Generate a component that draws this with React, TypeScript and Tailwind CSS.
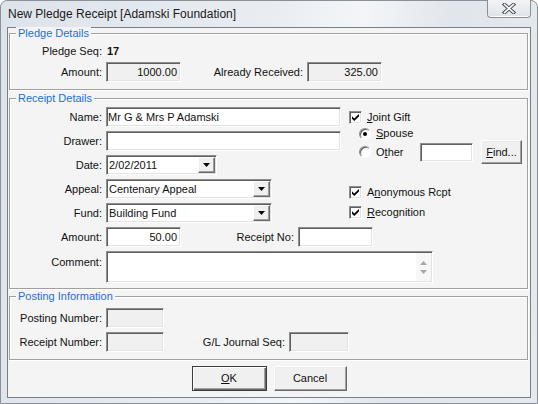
import type { ReactNode } from 'react'

// classic 3D edges
const sunken =
  'border border-t-[#8d8d8d] border-l-[#8d8d8d] border-b-white border-r-white shadow-[inset_1px_1px_0_#5f5f5f,inset_-1px_-1px_0_#e3e3e3]'
const raised =
  'border border-t-white border-l-white border-b-[#696969] border-r-[#696969] shadow-[inset_-1px_-1px_0_#a0a0a0,inset_1px_1px_0_#ececec] bg-[#f0f0f0]'

function Group({ title, className, children }: { title: string; className: string; children: ReactNode }) {
  return (
    <div className={`relative ml-[1px] w-[519px] border border-[#a0a0a0] shadow-[inset_1px_1px_0_#fff,1px_1px_0_#fff] ${className}`}>
      <span className="absolute -top-[7px] left-[6px] bg-[#f4f4f4] px-[2px] leading-[13px] text-[#1f6fd6]">{title}</span>
      {children}
    </div>
  )
}

function Label({ children, className = 'w-[92px]' }: { children: ReactNode; className?: string }) {
  return <span className={`shrink-0 text-right leading-[13px] ${className}`}>{children}</span>
}

function Field({ w, value = '', right, gray, h = 'h-[20px]' }: { w: string; value?: string; right?: boolean; gray?: boolean; h?: string }) {
  return (
    <div
      className={`${sunken} ${w} ${h} ${gray ? 'bg-[#f0f0f0]' : 'bg-white'} flex items-center ${right ? 'justify-end pr-[3px]' : 'pl-[1px]'} ml-[4px] shrink-0`}
    >
      {value}
    </div>
  )
}

function Combo({ w, value }: { w: string; value: string }) {
  return (
    <div className={`${sunken} ${w} h-[20px] bg-white flex items-center ml-[4px] shrink-0`}>
      <span className="flex-1 pl-[2px]">{value}</span>
      <div className={`${raised} w-[17px] h-[16px] mr-[1px] flex items-center justify-center`}>
        <svg width="7" height="4" viewBox="0 0 7 4">
          <path d="M0 0h7L3.5 4z" fill="#000" />
        </svg>
      </div>
    </div>
  )
}

function Check({ children }: { children: ReactNode }) {
  return (
    <div className="flex h-[13px] items-center">
      <div className={`${sunken} w-[13px] h-[13px] bg-white flex items-center justify-center shrink-0`}>
        <svg width="7" height="7" viewBox="0 0 7 7">
          <path d="M0 2.2L2.2 4.4L7 0V2.6L2.2 7L0 4.8z" fill="#000" />
        </svg>
      </div>
      <span className="ml-[5px] leading-[13px]">{children}</span>
    </div>
  )
}

function Radio({ on }: { on?: boolean }) {
  return (
    <div className="ml-[10px] w-[12px] h-[12px] rounded-full border border-t-[#8d8d8d] border-l-[#8d8d8d] border-b-white border-r-white shadow-[inset_1px_1px_0_#5f5f5f] bg-white flex items-center justify-center shrink-0">
      {on && <div className="w-[4px] h-[4px] rounded-full bg-black" />}
    </div>
  )
}

export default function App() {
  return (
    <div className="w-[538px] h-[404px] overflow-hidden bg-white font-['Liberation_Sans',Arial,sans-serif] text-[11px] text-[#111]">
      <div className="flex h-[404px] w-[538px] flex-col rounded-t-[7px] border border-[#8a9199] bg-[linear-gradient(100deg,#dde3ea_0%,#e9edf2_45%,#f3f5f8_60%,#e1e6ec_75%,#e6eaef_100%)]">
        {/* title bar */}
        <div className="flex h-[26px] shrink-0 items-start">
          <span className="pl-[7px] pt-[6px] text-[12px] leading-[15px] text-[#1b1b1b]">New Pledge Receipt [Adamski Foundation]</span>
          <div className="ml-auto mr-[6px] -mt-[1px] flex h-[18px] w-[44px] items-center justify-center rounded-b-[4px] border border-t-0 border-[#8b9097] bg-[linear-gradient(#f2f4f6,#dfe3e8)] shadow-[inset_0_-1px_0_#fff]">
            <svg width="14" height="11" viewBox="0 0 14 11">
              <path d="M2.5 1.5L11.5 9.5M11.5 1.5L2.5 9.5" stroke="#4a4f55" strokeWidth="3.6" strokeLinecap="square" />
              <path d="M2.5 1.5L11.5 9.5M11.5 1.5L2.5 9.5" stroke="#fff" strokeWidth="1.6" strokeLinecap="square" />
            </svg>
          </div>
        </div>

        {/* client area */}
        <div className="mx-[6px] flex h-[371px] flex-col border border-[#7b7f85] bg-[#f4f4f4]">
          <Group title="Pledge Details" className="mt-[5px] pt-[8px] pb-[7px]">
            <div className="flex h-[18px] items-center">
              <Label>Pledge Seq:</Label>
              <span className="ml-[5px] font-bold">17</span>
            </div>
            <div className="mt-[2px] flex h-[20px] items-center">
              <Label>Amount:</Label>
              <Field w="w-[75px]" value="1000.00" right gray />
              <Label className="w-[122px]">Already Received:</Label>
              <Field w="w-[75px]" value="325.00" right gray />
            </div>
          </Group>

          <Group title="Receipt Details" className="mt-[8px] pt-[8px] pb-[5px]">
            <div className="flex">
              <div className="flex flex-col gap-[4px]">
                <div className="flex h-[20px] items-center">
                  <Label>Name:</Label>
                  <Field w="w-[235px]" value="Mr G & Mrs P Adamski" />
                </div>
                <div className="flex h-[20px] items-center">
                  <Label>Drawer:</Label>
                  <Field w="w-[235px]" />
                </div>
                <div className="flex h-[20px] items-center">
                  <Label>Date:</Label>
                  <Combo w="w-[111px]" value="2/02/2011" />
                </div>
                <div className="flex h-[20px] items-center">
                  <Label>Appeal:</Label>
                  <Combo w="w-[166px]" value="Centenary Appeal" />
                </div>
                <div className="flex h-[20px] items-center">
                  <Label>Fund:</Label>
                  <Combo w="w-[166px]" value="Building Fund" />
                </div>
              </div>

              <div className="ml-[8px] flex flex-col">
                <div className="mt-[4px]">
                  <Check>
                    <span className="underline">J</span>oint Gift
                  </Check>
                </div>
                <div className="mt-[3px] flex h-[13px] items-center">
                  <Radio on />
                  <span className="ml-[5px] leading-[13px]">
                    <span className="underline">S</span>pouse
                  </span>
                </div>
                <div className="flex h-[24px] items-center">
                  <Radio />
                  <span className="ml-[5px] w-[44px] leading-[13px]">
                    O<span className="underline">t</span>her
                  </span>
                  <div className={`${sunken} h-[19px] w-[53px] bg-white`} />
                  <div className={`${raised} ml-[8px] flex h-[24px] w-[41px] items-center justify-center`}>
                    <span>
                      <span className="underline">F</span>ind...
                    </span>
                  </div>
                </div>
                <div className="mt-[22px]">
                  <Check>
                    A<span className="underline">n</span>onymous Rcpt
                  </Check>
                </div>
                <div className="mt-[7px]">
                  <Check>
                    <span className="underline">R</span>ecognition
                  </Check>
                </div>
              </div>
            </div>

            <div className="mt-[4px] flex h-[20px] items-center">
              <Label>Amount:</Label>
              <Field w="w-[75px]" value="50.00" right />
              <Label className="w-[113px]">Receipt No:</Label>
              <Field w="w-[75px]" />
            </div>

            <div className="mt-[4px] flex h-[32px] items-start">
              <Label className="w-[92px] pt-[5px]">Comment:</Label>
              <div className={`${sunken} ml-[4px] flex h-[32px] w-[327px] justify-end bg-white`}>
                <div className="mr-[1px] mt-[1px] flex h-[28px] w-[15px] flex-col items-center justify-center gap-[5px] bg-[#f7f7f7]">
                  <svg width="7" height="4" viewBox="0 0 7 4">
                    <path d="M3.5 0L7 4H0z" fill="#a8a8a8" />
                  </svg>
                  <svg width="7" height="4" viewBox="0 0 7 4">
                    <path d="M0 0h7L3.5 4z" fill="#a8a8a8" />
                  </svg>
                </div>
              </div>
            </div>
          </Group>

          <Group title="Posting Information" className="mt-[7px] pt-[11px] pb-[7px]">
            <div className="flex h-[20px] items-center">
              <Label>Posting Number:</Label>
              <Field w="w-[58px]" gray />
            </div>
            <div className="mt-[4px] flex h-[20px] items-center">
              <Label>Receipt Number:</Label>
              <Field w="w-[58px]" gray />
              <Label className="w-[121px]">G/L Journal Seq:</Label>
              <Field w="w-[60px]" gray />
            </div>
          </Group>

          <div className="mt-[6px] flex justify-center gap-[7px]">
            <div className="flex h-[25px] w-[75px] items-center justify-center border border-[#3c3c3c] bg-[#f0f0f0] shadow-[inset_1px_1px_0_#fff,inset_-1px_-1px_0_#696969,inset_-2px_-2px_0_#a0a0a0]">
              <span>
                <span className="underline">O</span>K
              </span>
            </div>
            <div className={`${raised} flex h-[25px] w-[73px] items-center justify-center`}>Cancel</div>
          </div>
        </div>
      </div>
    </div>
  )
}
